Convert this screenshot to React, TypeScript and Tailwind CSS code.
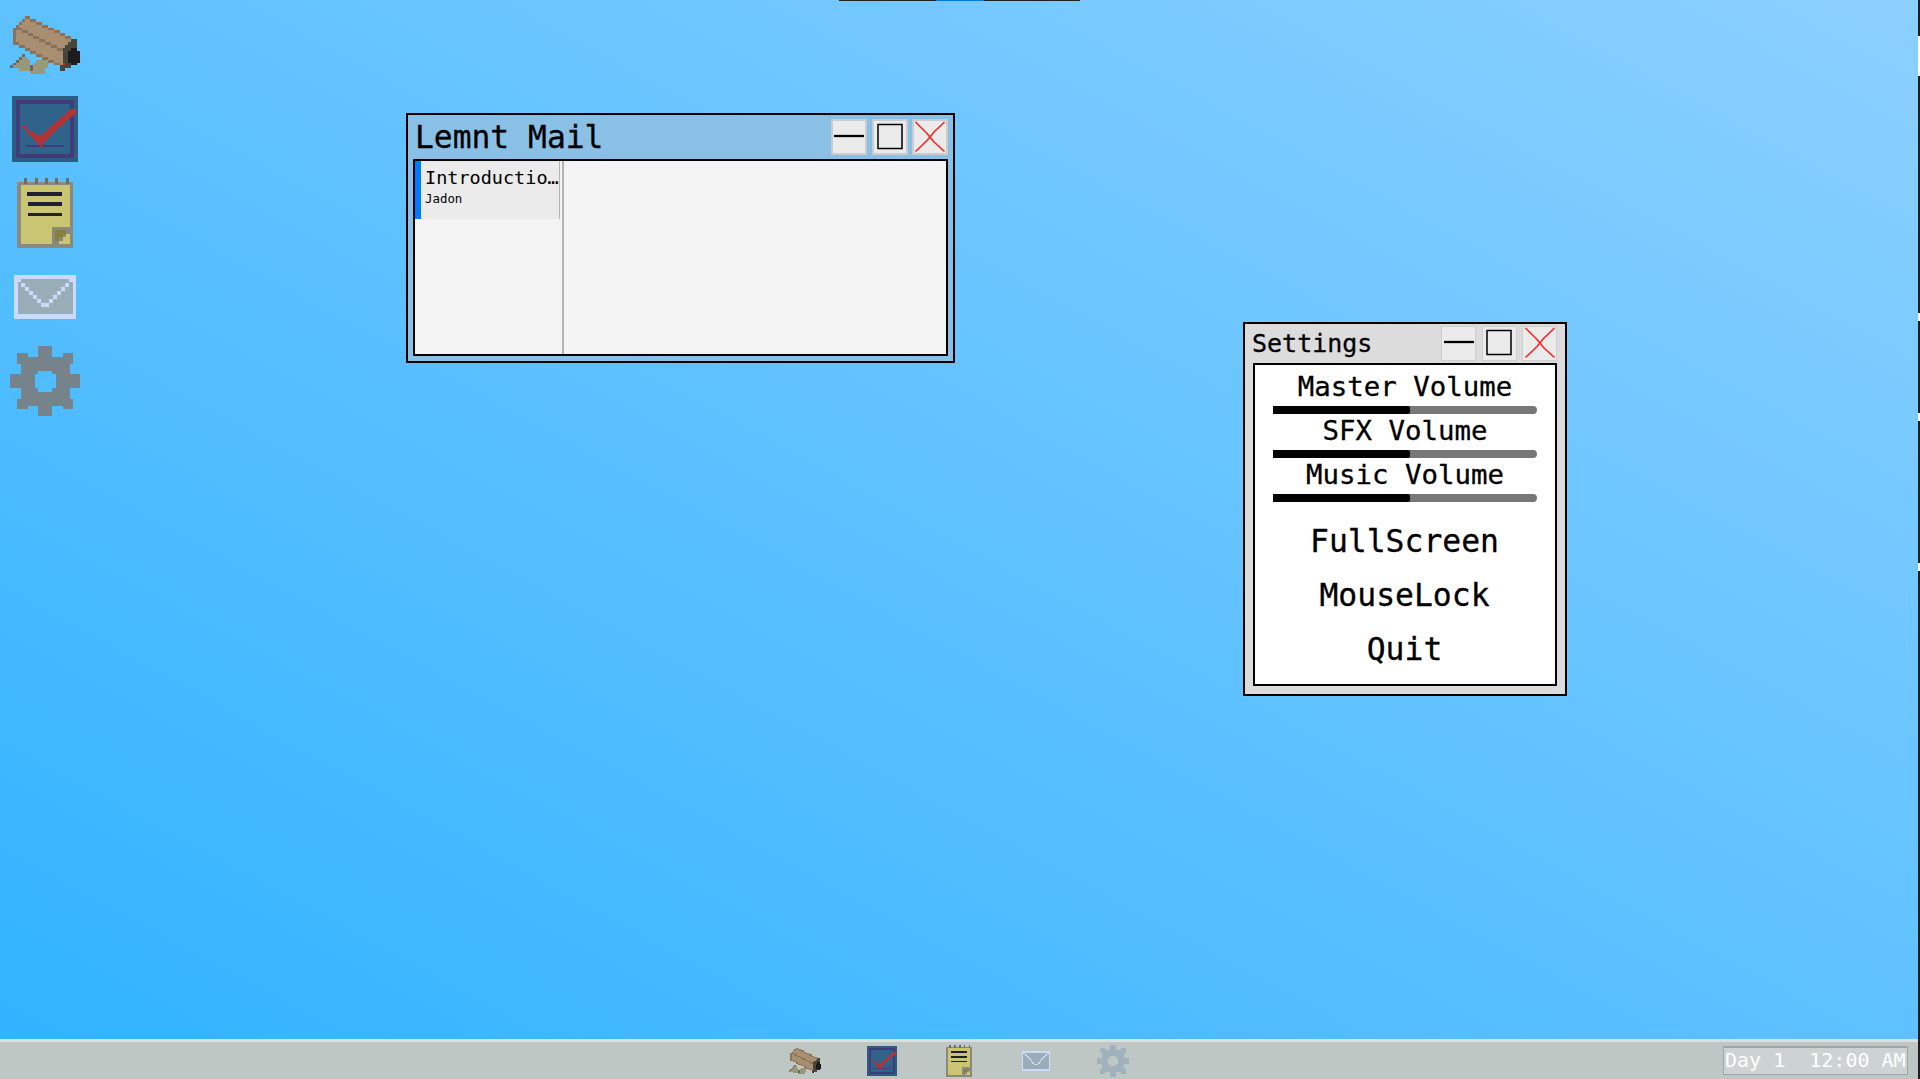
import type { ReactNode } from 'react';

interface IconProps {
  className?: string;
}

interface WindowProps {
  title: string;
  className: string;
  titleClassName: string;
  bodyClassName: string;
  buttonGroupClassName: string;
  buttonClassName: string;
  children: ReactNode;
}

const CAMERA_COLORS: Record<string, string> = {
  d: '#8a715c',
  b: '#a98f72',
  f: '#48463b',
  k: '#1e1b1c',
  r: '#fb0d0d',
  s: '#9a987a',
  e: '#6d6a58',
};

const CAMERA_ROWS = [
  '........................',
  '........................',
  '.....dd.................',
  '....dbbdd...............',
  '...dbbbbbdd.............',
  '..dbbbbbbbbdd...........',
  '.dddbbbbbbbbbdd.........',
  '.dbbddbbbbbbbbbdd.......',
  '.dbbbbddbbbbbbbbbdd.....',
  '.dbbbbbbddbbbbbbbbbdd...',
  '.dbbbbbbbbddbbbbbbbbbff.',
  '.ddbbbbbbbbbddbbbbbbfff.',
  '...ddbbbbbbbbbddbbbffff.',
  '.....ddbbbbbbbbbddfffkk.',
  '.......ddbbbbbbbbbffkkkk',
  '....e....ddbbbbbbbffkkkk',
  '...ess.....ddbbbbbffkkkk',
  '..essss..ssssddbbbffkkkk',
  '.esssss.sssss..ddbrffkk.',
  'essssssesssss....ffff...',
  '...ssssessss.....ff.....',
  '.......sssss............',
];

function CameraIcon({ className }: IconProps) {
  return (
    <svg className={className} viewBox="0 0 24 24" shapeRendering="crispEdges">
      {CAMERA_ROWS.map((row, y) =>
        row
          .split('')
          .map((c, x) =>
            c === '.' ? null : (
              <rect
                key={`${x}-${y}`}
                x={x}
                y={y}
                width={1}
                height={1}
                fill={CAMERA_COLORS[c]}
              />
            )
          )
      )}
    </svg>
  );
}

function TasksIcon({ className }: IconProps) {
  return (
    <svg className={className} viewBox="0 0 70 70" shapeRendering="crispEdges">
      <rect x="2" y="2" width="66" height="66" fill="#2d5d82" />
      <rect
        x="8"
        y="8"
        width="54"
        height="54"
        fill="#306389"
        stroke="#403c79"
        strokeWidth="4"
      />
      <rect x="16" y="51" width="38" height="2" fill="#403c79" />
      <path
        d="M12 32h4v2l4 3l5 2l5 3l5-4l10-9l8-7l8-7h5v5l-8 5l-8 8l-10 9l-6 6l-3 6l-3-4l-6-6l-5-6z"
        fill="#b03336"
      />
    </svg>
  );
}

function NotesIcon({ className }: IconProps) {
  return (
    <svg className={className} viewBox="0 0 70 70" shapeRendering="crispEdges">
      <rect x="7" y="3.5" width="56" height="66.5" fill="#8b897b" />
      <rect x="10.5" y="7" width="49" height="59" fill="#cac572" />
      <path
        d="M14 0h3.4v6.4h-3.4zM24.6 0h3.4v6.4h-3.4zM35 0h3.4v6.4h-3.4zM45 0h3.4v6.4h-3.4zM56 0h3.4v6.4h-3.4z"
        fill="#6f6c67"
      />
      <path
        d="M17.4 14h34.6v3.5h-34.6zM18 24h34v3.6h-34zM18 34.6h34v3.4h-34z"
        fill="#211f33"
      />
      <rect x="42" y="48.6" width="21" height="21.4" fill="#8b897b" />
      <path d="M45 52h11v3.5h-3.5v3.5h-3.5v3.5h-4z" fill="#85803a" />
      <path d="M56 56h3.6v10h-10.6v-3.5h3.5v-3.5h3.5z" fill="#cac572" />
    </svg>
  );
}

function MailIcon({ className }: IconProps) {
  return (
    <svg className={className} viewBox="0 0 70 70" shapeRendering="crispEdges">
      <rect x="4" y="12.7" width="62" height="44" fill="#ccdbfb" />
      <path d="M11 17h48v3h3.5v32h-55v-32h3.5z" fill="#99adb7" />
      {[0, 1, 2, 3, 4].map((i) => (
        <g key={i} fill="#ccdbfb">
          <rect x={11 + i * 4} y={20.5 + i * 4} width="4" height="4" />
          <rect x={55 - i * 4} y={20.5 + i * 4} width="4" height="4" />
        </g>
      ))}
      <rect x="31" y="40.5" width="8" height="4" fill="#ccdbfb" />
    </svg>
  );
}

function GearIcon({ className }: IconProps) {
  return (
    <svg className={className} viewBox="0 0 20 20" shapeRendering="crispEdges">
      <path
        fill="currentColor"
        fillRule="evenodd"
        d="M8 0h4v3h3v-1h3v3h-1v3h3v4h-3v3h1v3h-3v-1h-3v3h-4v-3h-3v1h-3v-3h1v-3h-3v-4h3v-3h-1v-3h3v1h3zM8 7v1h-1v4h1v1h4v-1h1v-4h-1v-1z"
      />
    </svg>
  );
}

function WindowButtons({
  className,
  buttonClassName,
}: {
  className: string;
  buttonClassName: string;
}) {
  const button = `flex items-center justify-center bg-[#ebebeb] ${buttonClassName}`;

  return (
    <div className={`flex ${className}`}>
      <button type="button" aria-label="Minimize" className={button}>
        <svg className="h-8 w-8 shrink-0" viewBox="0 0 32 32">
          <path d="M1 15h30" stroke="#000" strokeWidth="2.3" />
        </svg>
      </button>
      <button type="button" aria-label="Maximize" className={button}>
        <svg className="h-8 w-8 shrink-0" viewBox="0 0 32 32" fill="none">
          <path d="M4 3.5h24v24h-24z" stroke="#000" strokeWidth="1.5" />
        </svg>
      </button>
      <button type="button" aria-label="Close" className={button}>
        <svg className="h-8 w-8 shrink-0" viewBox="0 0 32 32">
          <path
            d="M1.5 1L13 12.5L20 21L30.5 30.5M30.5 1L20 11L13 19.5L1.5 30.5"
            fill="none"
            stroke="#ff2323"
            strokeWidth="1.6"
          />
        </svg>
      </button>
    </div>
  );
}

function Window({
  title,
  className,
  titleClassName,
  bodyClassName,
  buttonGroupClassName,
  buttonClassName,
  children,
}: WindowProps) {
  return (
    <section
      className={`absolute flex flex-col border-2 border-black ${className}`}
    >
      <header
        className={`flex shrink-0 items-center justify-between ${titleClassName}`}
      >
        <h2 className="pt-px whitespace-pre">{title}</h2>
        <WindowButtons
          className={buttonGroupClassName}
          buttonClassName={buttonClassName}
        />
      </header>
      <div className={`min-h-0 flex-1 border-2 border-black ${bodyClassName}`}>
        {children}
      </div>
    </section>
  );
}

function VolumeSlider({ label }: { label: string }) {
  return (
    <div className="flex flex-col gap-[3px]">
      <span className="text-center text-[27.4px] leading-[33px]">{label}</span>
      <div className="mx-[18px] h-2 overflow-hidden rounded-r-full bg-[#777777]">
        <div className="h-full w-[137px] rounded-r-xs bg-black" />
      </div>
    </div>
  );
}

const APPS = [
  { name: 'Cameras', Icon: CameraIcon },
  { name: 'Tasks', Icon: TasksIcon },
  { name: 'Notes', Icon: NotesIcon },
  { name: 'Mail', Icon: MailIcon },
  { name: 'Settings', Icon: GearIcon },
];

export default function App() {
  return (
    <div className="flex h-[1079px] w-[1920px] overflow-hidden bg-[#1d1d22] font-['DejaVu_Sans_Mono',monospace] text-black [-webkit-text-stroke:0.3px]">
      <div className="flex w-[1918px] flex-col">
        <main className="relative flex-1 bg-[linear-gradient(to_top_right,#31b3ff,#8cd0ff)] p-2.5">
          <nav className="flex w-[70px] flex-col gap-3.5 text-[#76838b]">
            {APPS.map(({ name, Icon }) => (
              <button key={name} type="button" aria-label={name}>
                <Icon className="h-[70px] w-[70px]" />
              </button>
            ))}
          </nav>

          <div className="absolute top-0 left-[839px] flex h-px w-[241px] justify-center bg-[#222222]">
            <div className="w-12 bg-[#0078d7]" />
          </div>

          <Window
            title="Lemnt Mail"
            className="top-[113px] left-[406px] h-[250px] w-[549px] bg-[#8abfe6] px-[5px] pb-[5px]"
            titleClassName="h-11 pl-0.5 text-[31.3px]"
            bodyClassName="flex bg-[#f3f3f3]"
            buttonGroupClassName="gap-[4.5px]"
            buttonClassName="h-9 w-9 border-2 border-[#cccccc]"
          >
            <aside className="w-[149px] border-r-2 border-[#b4b4b4]">
              <div className="flex h-[58px] w-[145px] flex-col gap-[3px] border-r border-l-6 border-r-[#b4b4b4] border-l-[#007bff] bg-[#ebebeb] pt-[7px] pl-1 [-webkit-text-stroke:0px]">
                <span className="text-[18.5px] leading-5 whitespace-pre">
                  Introductio…
                </span>
                <span className="text-[12.4px] leading-4">Jadon</span>
              </div>
            </aside>
          </Window>

          <Window
            title="Settings"
            className="top-[322px] left-[1243px] h-[374px] w-[324px] bg-[#dcdcdc] px-2 pb-2"
            titleClassName="h-[39px] -ml-px text-[25px]"
            bodyClassName="flex flex-col bg-white pt-[5px]"
            buttonGroupClassName="gap-[5.5px] pb-px"
            buttonClassName="h-[35px] w-[35px] border border-[#cfcfcf]"
          >
            <VolumeSlider label="Master Volume" />
            <VolumeSlider label="SFX Volume" />
            <VolumeSlider label="Music Volume" />
            <div className="mt-3 -ml-px flex flex-col text-[31.4px] leading-[54px]">
              <button type="button">FullScreen</button>
              <button type="button">MouseLock</button>
              <button type="button">Quit</button>
            </div>
          </Window>
        </main>

        <footer className="grid h-10 grid-cols-[1fr_auto_1fr] items-center border-t-3 border-[#dddfdf] bg-[#bfc7c5]">
          <div />
          <div className="flex gap-[45px] text-[#9fb2bd]">
            {APPS.map(({ name, Icon }) => (
              <button key={name} type="button" aria-label={name}>
                <Icon className="h-8 w-8" />
              </button>
            ))}
          </div>
          <div className="mr-2.5 flex h-[29px] w-[185px] items-center justify-self-end border border-t-2 border-[#a3a6a6] bg-[#cdd3d2] pb-0.5 pl-px text-[20px] whitespace-pre text-white [-webkit-text-stroke:0px]">
            {'Day 1  12:00 AM'}
          </div>
        </footer>
      </div>
      {/* sliver of the neighbouring screen */}
      <div className="flex w-0.5 flex-col pt-9">
        <div className="h-10 bg-white" />
        <div className="mt-[237px] h-2 bg-white" />
        <div className="mt-[92px] h-2 bg-white" />
        <div className="mt-[142px] h-2 bg-white" />
      </div>
    </div>
  );
}
